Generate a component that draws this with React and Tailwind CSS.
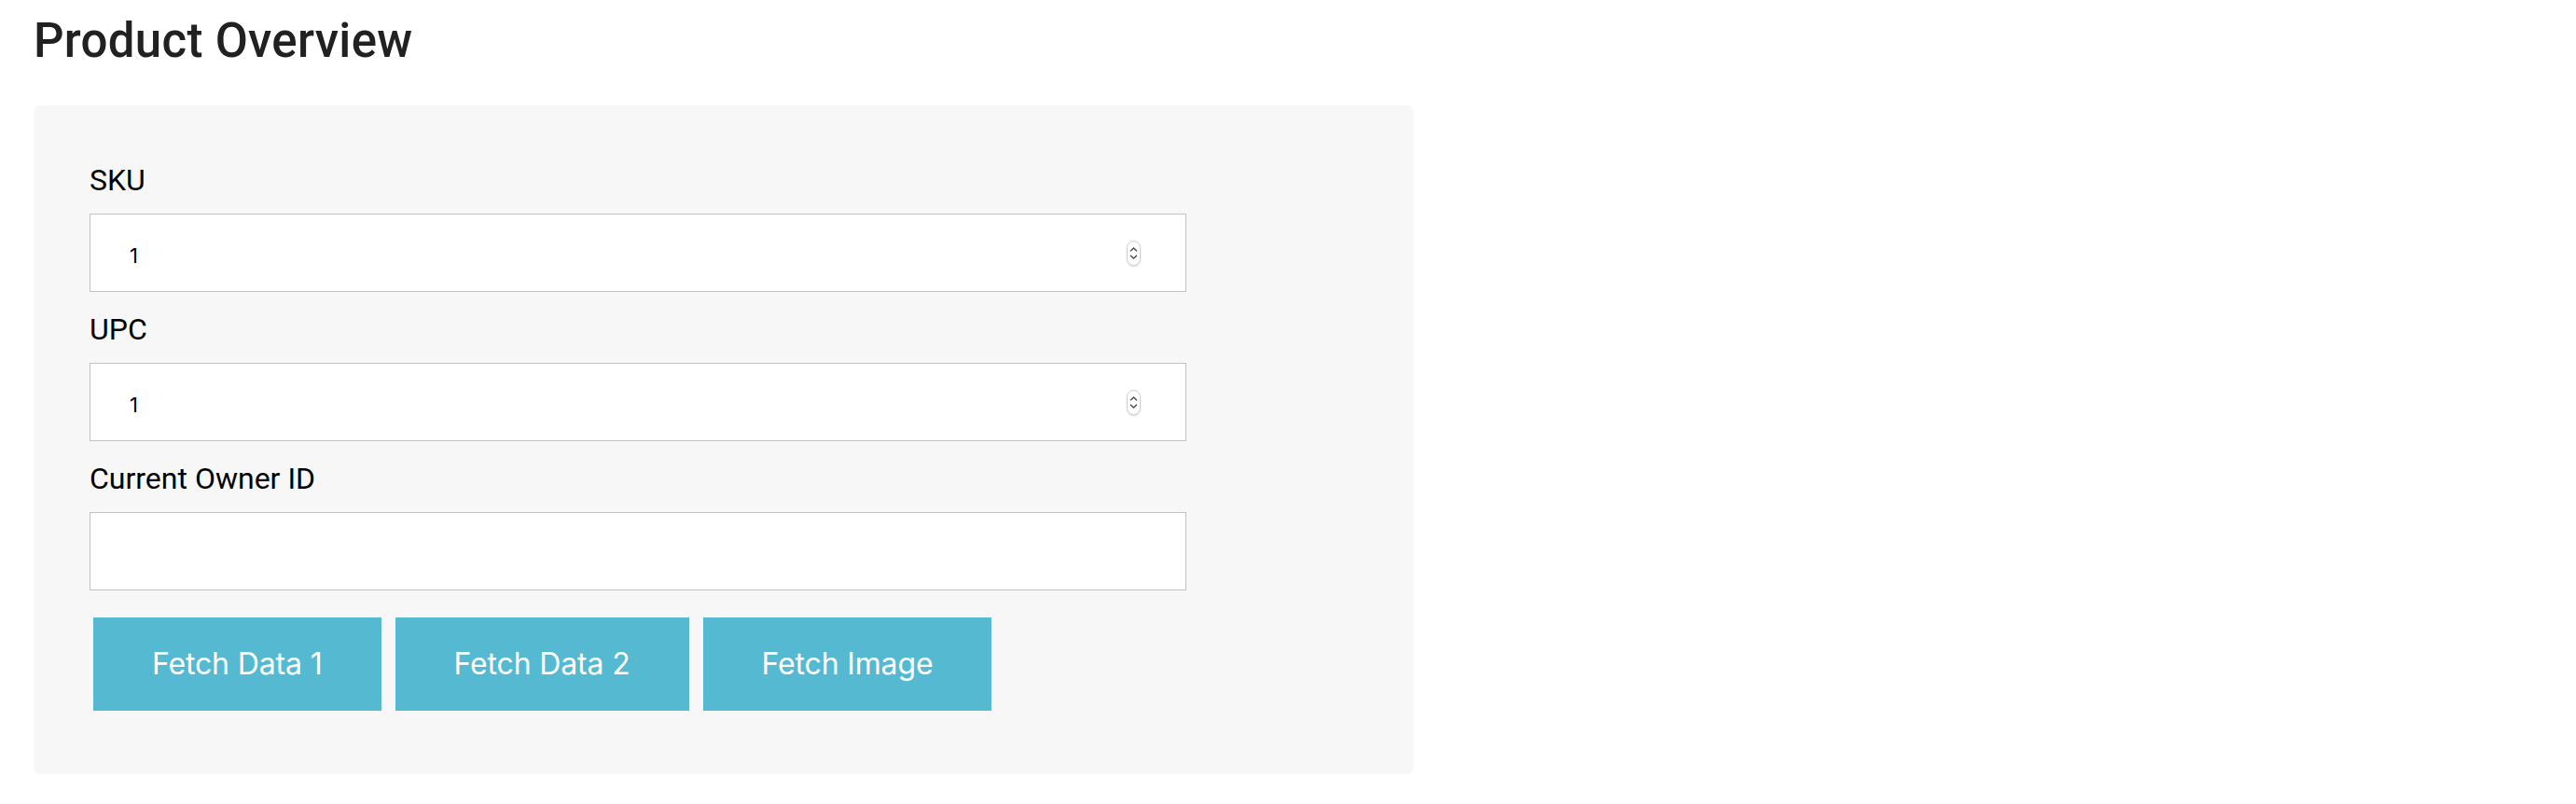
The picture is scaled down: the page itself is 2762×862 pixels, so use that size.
import React from "react";

function Spinner() {
  return (
    <div className="mr-[48px] flex h-[27px] w-[15px] shrink-0 flex-col items-center justify-center gap-[3px] rounded-full border border-[#d0d0d0] bg-white shadow-[0_1px_2px_rgba(0,0,0,0.15)]">
      <svg width="9" height="5" viewBox="0 0 9 5" fill="none">
        <path d="M1 4.3 L4.5 1 L8 4.3" stroke="#4a4a4a" strokeWidth="1.4" />
      </svg>
      <svg width="9" height="5" viewBox="0 0 9 5" fill="none">
        <path d="M1 0.7 L4.5 4 L8 0.7" stroke="#4a4a4a" strokeWidth="1.4" />
      </svg>
    </div>
  );
}

function Field({ label, value, number, last }) {
  return (
    <div className={last ? "" : "mb-[20px]"}>
      <div className="text-[32px] leading-[40px] text-black font-['Roboto',sans-serif]">{label}</div>
      <div className="mt-[16px] flex h-[84px] w-[1176px] items-center border border-[#c2c2c2] bg-white">
        <input
          type="text"
          defaultValue={value}
          className="h-full min-w-0 flex-1 bg-transparent pl-[42px] pt-[5px] text-[22px] text-black outline-none font-['Inter',sans-serif]"
        />
        {number && <Spinner />}
      </div>
    </div>
  );
}

export default function App() {
  return (
    <div className="min-h-screen bg-white pl-[36px] pt-[13px] font-['Roboto',sans-serif]">
      <h1 className="text-[51px] font-medium leading-[62px] tracking-[0.3px] text-[#212121]">Product Overview</h1>
      <div className="mt-[38px] w-[1480px] rounded-[8px] bg-[#f7f7f7] pb-[68px] pl-[60px] pt-[60px]">
        <Field label="SKU" value="1" number />
        <Field label="UPC" value="1" number />
        <Field label="Current Owner ID" value="" last />
        <div className="ml-[4px] mt-[29px] flex gap-[15px]">
          {["Fetch Data 1", "Fetch Data 2", "Fetch Image"].map((t) => (
            <button
              key={t}
              className="h-[100px] bg-[#54b9d1] px-[63px] text-[32px] tracking-[-0.15px] text-white font-['Inter',sans-serif]"
            >
              {t}
            </button>
          ))}
        </div>
      </div>
    </div>
  );
}
